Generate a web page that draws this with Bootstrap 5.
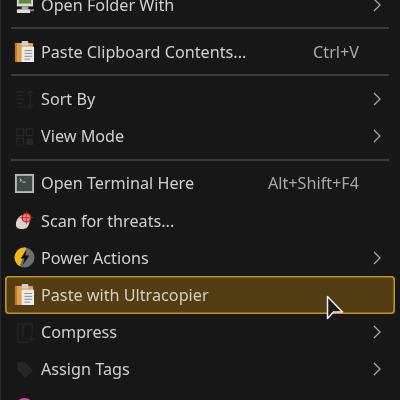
<!DOCTYPE html>
<html lang="en">
<head>
  <meta charset="UTF-8">
  <title>Context menu</title>
  <link href="https://cdn.jsdelivr.net/npm/bootstrap@5.3.3/dist/css/bootstrap.min.css" rel="stylesheet">
  <style>
    html, body { height: 400px; overflow: hidden; background: #171717; }
    .ctx-frame { height: 400px; overflow: hidden; border-left: 1px solid #2a2a2a; padding: 0 5px 0 4px; filter: blur(.35px); }
    .ctx-menu { margin-top: -14px; font: 16.2px/22px "Noto Sans", sans-serif; color: #d0d0d0; }
    .ctx-row { height: 37.2px; padding: 0 14px 0 9px; border-radius: 4px; }
    .ctx-row.active-row { background: #523e12; box-shadow: inset 0 0 0 1.6px #c4921e; color: #d8d0ba; }
    .ctx-row.cut-row { padding-top: 2px; }
    .ctx-ico { width: 21px; height: 21px; margin-right: 6px; flex: none; }
    .ctx-key { color: #a8a8a8; margin-right: 14px; }
    .ctx-arrow { width: 8px; height: 14px; flex: none; }
    .ctx-sep { height: 2px; margin: 4px 6px; background: #3a3a3a; }
    .ctx-cursor { position: absolute; left: 322px; top: 292px; width: 24px; height: 32px; }
  </style>
</head>
<body>

<div class="ctx-frame position-relative">
  <div class="ctx-menu">

    <div class="ctx-row d-flex align-items-center">
      <svg class="ctx-ico" viewBox="0 0 22 22"><rect x="3" y="0" width="17" height="13" fill="#d8d8d8"/><rect x="5" y="1" width="13" height="9" fill="#5d8c3c"/><rect x="8" y="13" width="7" height="3" fill="#aaa"/><rect x="3" y="16" width="14" height="4" rx="1" fill="#ddd"/><rect x="17" y="16" width="4" height="2" fill="#888"/></svg>
      <span>Open Folder With</span>
      <svg class="ctx-arrow ms-auto" viewBox="0 0 8 14"><path d="M1 1l6 6-6 6" fill="none" stroke="#a8a8a8" stroke-width="1.3"/></svg>
    </div>

    <div class="ctx-sep"></div>

    <div class="ctx-row d-flex align-items-center">
      <svg class="ctx-ico" viewBox="0 0 22 22"><rect x="1" y="2" width="19" height="20" rx="1" fill="#e0a04e"/><rect x="1" y="2" width="2" height="20" fill="#b97a22"/><rect x="8" y="0" width="7" height="5" rx="1" fill="#cfcfcf"/><rect x="8" y="6" width="13" height="16" fill="#ececec"/><path d="M11 10h8M11 13h8M11 16h8M11 19h6" stroke="#8a8a8a"/></svg>
      <span>Paste Clipboard Contents...</span>
      <span class="ctx-key ms-auto">Ctrl+V</span>
      <svg class="ctx-arrow" viewBox="0 0 8 14"></svg>
    </div>

    <div class="ctx-sep"></div>

    <div class="ctx-row d-flex align-items-center">
      <svg class="ctx-ico" viewBox="0 0 22 22"><path d="M3 4h8M3 8h6M3 12h8M3 16h6M3 20h8M17 3v18M14 6l3-3 3 3M14 18l3 3 3-3" fill="none" stroke="#262626" stroke-width="1.3"/></svg>
      <span>Sort By</span>
      <svg class="ctx-arrow ms-auto" viewBox="0 0 8 14"><path d="M1 1l6 6-6 6" fill="none" stroke="#a8a8a8" stroke-width="1.3"/></svg>
    </div>

    <div class="ctx-row d-flex align-items-center">
      <svg class="ctx-ico" viewBox="0 0 22 22"><g fill="none" stroke="#262626" stroke-width="1.4"><rect x="3" y="3" width="7" height="7"/><rect x="13" y="3" width="7" height="7"/><rect x="3" y="13" width="7" height="7"/></g><rect x="13" y="13" width="7" height="7" fill="#262626"/></svg>
      <span>View Mode</span>
      <svg class="ctx-arrow ms-auto" viewBox="0 0 8 14"><path d="M1 1l6 6-6 6" fill="none" stroke="#a8a8a8" stroke-width="1.3"/></svg>
    </div>

    <div class="ctx-sep"></div>

    <div class="ctx-row d-flex align-items-center">
      <svg class="ctx-ico" viewBox="0 0 22 22"><rect x="1" y="1" width="20" height="20" fill="#b5b8b5"/><rect x="3" y="3" width="16" height="16" fill="#3d4a45"/><path d="M6 6l2 1.500-2 1.500" fill="none" stroke="#ddd"/><rect x="9" y="9" width="3" height="1" fill="#ccc"/></svg>
      <span>Open Terminal Here</span>
      <span class="ctx-key ms-auto">Alt+Shift+F4</span>
      <svg class="ctx-arrow" viewBox="0 0 8 14"></svg>
    </div>

    <div class="ctx-row d-flex align-items-center">
      <svg class="ctx-ico" viewBox="0 0 22 22"><path d="M2 15c0-5 4-10 9-10s6 6 5 9-2 6-7 6-7-1-7-5z" fill="#d8d4ce"/><circle cx="13" cy="8" r="4.500" fill="#d98a8a" stroke="#d41c1c" stroke-width="1.400"/><path d="M13 1v14M6 8h14" stroke="#d41c1c" stroke-width=".8"/></svg>
      <span>Scan for threats...</span>
    </div>

    <div class="ctx-row d-flex align-items-center">
      <svg class="ctx-ico" viewBox="0 0 22 22"><circle cx="11" cy="11" r="10.500" fill="#6e6e6e"/><path d="M13 .7A10.500 10.500 0 0 0 6 20.200z" fill="#f0bb10"/><path d="M13 3L7 12h4l-2 7 7-10h-4z" fill="#111"/></svg>
      <span>Power Actions</span>
      <svg class="ctx-arrow ms-auto" viewBox="0 0 8 14"><path d="M1 1l6 6-6 6" fill="none" stroke="#a8a8a8" stroke-width="1.3"/></svg>
    </div>

    <div class="ctx-row active-row d-flex align-items-center">
      <svg class="ctx-ico" viewBox="0 0 22 22"><rect x="1" y="2" width="19" height="20" rx="1" fill="#e0a04e"/><rect x="1" y="2" width="2" height="20" fill="#b97a22"/><rect x="8" y="0" width="7" height="5" rx="1" fill="#cfcfcf"/><rect x="8" y="6" width="13" height="16" fill="#ececec"/><path d="M11 10h8M11 13h8M11 16h8M11 19h6" stroke="#8a8a8a"/></svg>
      <span>Paste with Ultracopier</span>
    </div>

    <div class="ctx-row d-flex align-items-center">
      <svg class="ctx-ico" viewBox="0 0 22 22"><path d="M19 13V2H4v19h11M9 2v14M9 5h2M9 8h2M9 11h2M18 15v6M15 18h6" fill="none" stroke="#262626" stroke-width="1.3"/></svg>
      <span>Compress</span>
      <svg class="ctx-arrow ms-auto" viewBox="0 0 8 14"><path d="M1 1l6 6-6 6" fill="none" stroke="#a8a8a8" stroke-width="1.3"/></svg>
    </div>

    <div class="ctx-row d-flex align-items-center">
      <svg class="ctx-ico" viewBox="0 0 22 22"><path d="M3 3h8l9 9-8 8-9-9z" fill="#262626"/></svg>
      <span>Assign Tags</span>
      <svg class="ctx-arrow ms-auto" viewBox="0 0 8 14"><path d="M1 1l6 6-6 6" fill="none" stroke="#a8a8a8" stroke-width="1.3"/></svg>
    </div>

    <div class="ctx-row cut-row d-flex align-items-center">
      <svg class="ctx-ico" viewBox="0 0 22 22"><circle cx="11" cy="11" r="10" fill="#d64aa8"/></svg>
      <span>Open in Blender</span>
    </div>

  </div>

  <svg class="ctx-cursor" viewBox="0 0 24 32"><path d="M4.500 4.500v22l6-6.500h9z" fill="#1a1a1a" stroke="#eee" stroke-width="1.500" stroke-linejoin="round"/></svg>
</div>

<script src="https://cdn.jsdelivr.net/npm/bootstrap@5.3.3/dist/js/bootstrap.bundle.min.js"></script>
</body>
</html>
